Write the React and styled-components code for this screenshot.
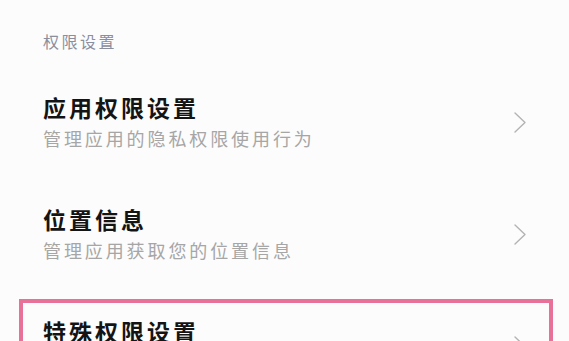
import React from "react";
import styled, { createGlobalStyle } from "styled-components";

const Global = createGlobalStyle`
  html, body { margin: 0; padding: 0; background: #fcfcfc; }
  body { font-family: "Noto Sans CJK SC", "Noto Sans", sans-serif; }
`;

const Page = styled.div`
  width: 569px;
  height: 341px;
  overflow: hidden;
  position: relative;
  background: #fcfcfc;
  padding: 0 43px;
  box-sizing: border-box;
`;

const SectionHeader = styled.div`
  font-size: 16px;
  line-height: 16px;
  letter-spacing: 2.5px;
  color: #8b8e9c;
  padding-top: 33px;
  height: 33px;
`;

const Row = styled.div`
  position: relative;
  height: 112px;
  box-sizing: border-box;
  padding-top: 30px;
  display: flex;
  align-items: flex-start;
  justify-content: space-between;
`;

const TextBlock = styled.div`
  display: flex;
  flex-direction: column;
  gap: 10px;
`;

const Title = styled.div`
  font-size: 23px;
  line-height: 23px;
  font-weight: 700;
  letter-spacing: 3px;
  color: #141414;
`;

const Subtitle = styled.div`
  font-size: 18px;
  line-height: 18px;
  letter-spacing: 2.9px;
  color: #a6a6a6;
`;

const Chevron = styled.svg`
  width: 12px;
  height: 21px;
  flex: none;
  margin-top: 16px;
`;

const Highlight = styled.div`
  position: absolute;
  left: -24px;
  right: -27px;
  top: 9px;
  bottom: -20px;
  border: 4px solid #e8719a;
  pointer-events: none;
`;

const items = [
  { title: "应用权限设置", sub: "管理应用的隐私权限使用行为" },
  { title: "位置信息", sub: "管理应用获取您的位置信息" },
  { title: "特殊权限设置", highlight: true },
];

export default function App() {
  return (
    <>
      <Global />
      <Page>
        <SectionHeader>权限设置</SectionHeader>
        {items.map((it) => (
          <Row key={it.title}>
            <TextBlock>
              <Title>{it.title}</Title>
              {it.sub && <Subtitle>{it.sub}</Subtitle>}
            </TextBlock>
            <Chevron viewBox="0 0 12 21">
              <polyline
                points="1,1 11,10.5 1,20"
                fill="none"
                stroke="#b3b3b3"
                strokeWidth="1.4"
                strokeLinecap="round"
                strokeLinejoin="round"
              />
            </Chevron>
            {it.highlight && <Highlight />}
          </Row>
        ))}
      </Page>
    </>
  );
}
